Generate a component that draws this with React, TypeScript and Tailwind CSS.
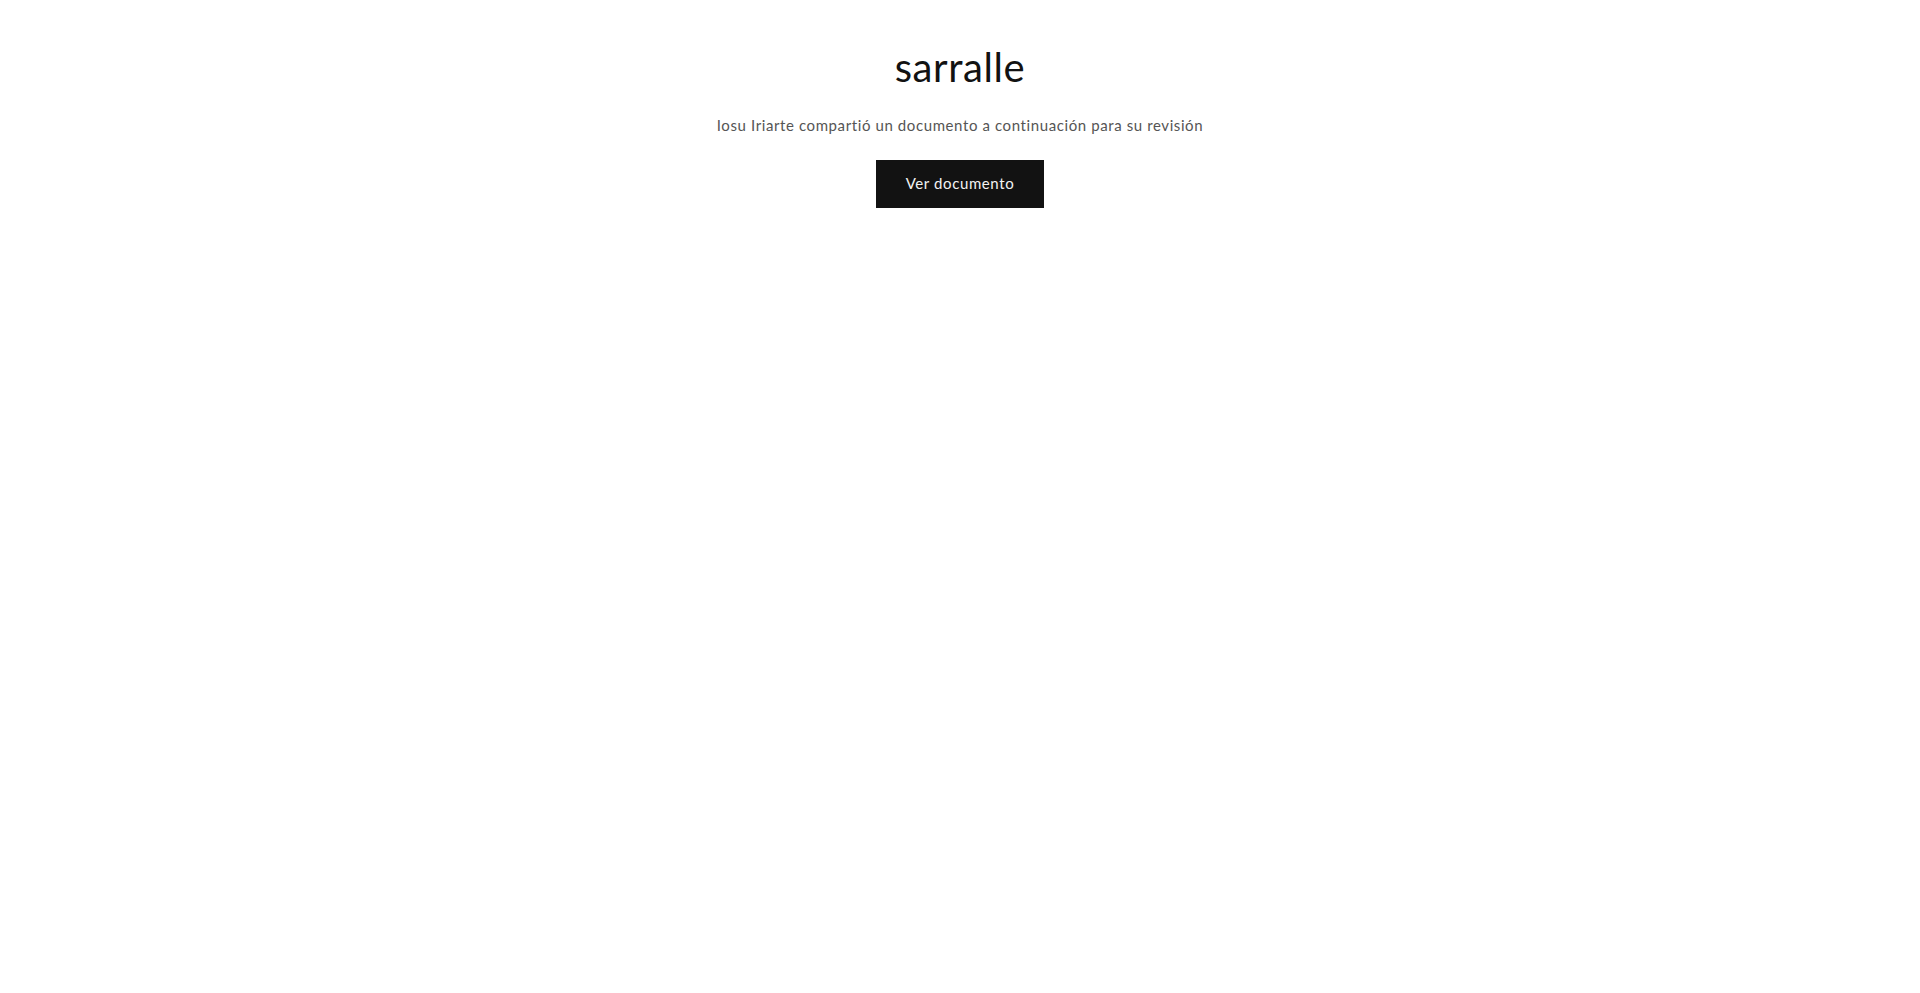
export default function App() {
  return (
    <div className="min-h-screen bg-white font-['Lato','Noto_Sans',sans-serif]">
      <div className="flex flex-col items-center pt-[41px]">
        <h1 className="text-[40px] leading-[1.3] font-normal text-[#121212] tracking-[0.6px]">
          sarralle
        </h1>
        <p className="mt-[21px] text-[15px] leading-[1.5] text-[#555555] tracking-[0.6px]">
          Iosu Iriarte compartió un documento a continuación para su revisión
        </p>
        <button className="mt-[23px] h-[48px] w-[168px] bg-[#121212] text-[15px] font-normal text-[#f3f3f3] tracking-[0.6px]">
          Ver documento
        </button>
      </div>
    </div>
  );
}
